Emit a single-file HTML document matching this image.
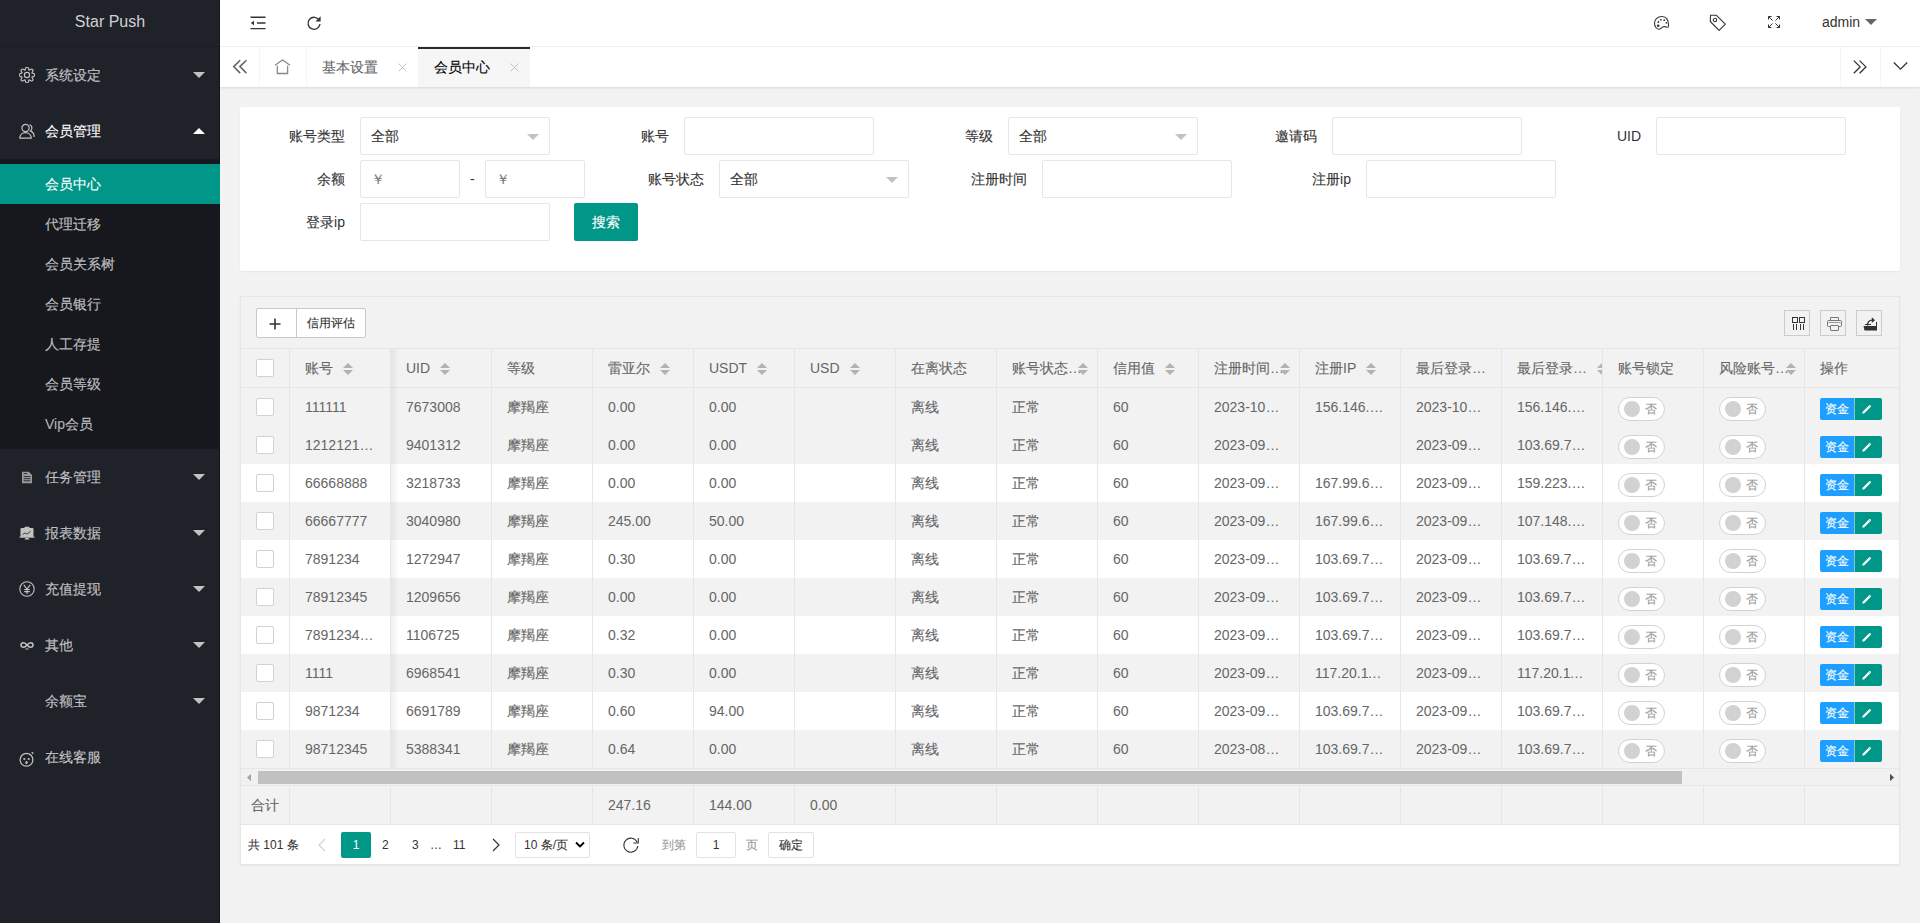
<!DOCTYPE html><html><head><meta charset="utf-8"><title>Star Push</title><style>
*{margin:0;padding:0;box-sizing:border-box}
html,body{width:1920px;height:923px;overflow:hidden;background:#f2f2f2;font-family:"Liberation Sans", sans-serif;font-size:14px;color:#333}
.abs{position:absolute}
z{-webkit-text-stroke-width:.12px}
.t{position:absolute;white-space:nowrap;line-height:20px}
#side{position:absolute;left:0;top:0;width:220px;height:923px;background:#20222A}
.logo{position:absolute;left:0;top:0;width:220px;height:46px;line-height:44px;text-align:center;font-size:16px;color:rgba(255,255,255,.8)}
.nav{position:absolute;left:0;width:220px;height:56px;line-height:56px;color:rgba(255,255,255,.7)}
.nav span{position:absolute;left:45px;top:0}
.nav .ico{position:absolute;left:19px;top:20px;width:16px;height:16px}
.more{position:absolute;left:193px;width:0;height:0;border-left:6px solid transparent;border-right:6px solid transparent}
.child{position:absolute;left:0;width:220px;height:40px;line-height:40px;color:rgba(255,255,255,.7)}
.child span{position:absolute;left:45px;top:0}
#hdr{position:absolute;left:220px;top:0;width:1700px;height:47px;background:#fff;border-bottom:1px solid #f0f0f0}
#tabs{position:absolute;left:220px;top:47px;width:1700px;height:40px;background:#fff;box-shadow:0 1px 2px 0 rgba(0,0,0,.1)}
.card{position:absolute;background:#fff;border-radius:2px;box-shadow:0 1px 2px 0 rgba(0,0,0,.05)}
.lab{position:absolute;width:110px;height:38px;line-height:38px;text-align:right;padding-right:15px;color:#333}
.inp{position:absolute;height:38px;border:1px solid #e6e6e6;border-radius:2px;background:#fff;line-height:36px;padding-left:10px;color:#333}
.edge{position:absolute;width:0;height:0;border-left:6px solid transparent;border-right:6px solid transparent;border-top:6px solid #c2c2c2}
.btn{position:absolute;background:#009688;color:#fff;border-radius:2px;text-align:center}
#tv{position:absolute;left:240px;top:296px;width:1660px;height:569px;border:1px solid #e6e6e6;background:#fff;overflow:hidden}
.row{position:absolute;left:241px;width:1658px;height:38px}
.cell{position:absolute;height:38px;line-height:38px;padding-left:15px;color:#666;white-space:nowrap;overflow:hidden}
.cell i{display:block;font-style:normal;width:70px;overflow:hidden;text-overflow:ellipsis;white-space:nowrap}
.vb{position:absolute;width:1px;background:#e6e6e6}
.hb{position:absolute;height:1px;background:#e6e6e6}
.sort{position:absolute;top:14px;width:10px;height:12px}
.sort:before{content:'';position:absolute;left:0;top:0;border-left:5px solid transparent;border-right:5px solid transparent;border-bottom:5px solid #b2b2b2}
.sort:after{content:'';position:absolute;left:0;top:7px;border-left:5px solid transparent;border-right:5px solid transparent;border-top:5px solid #b2b2b2}
.sorti{display:inline-block;position:relative;vertical-align:top;margin-left:10px;width:10px;height:38px}
.sorti:before{content:'';position:absolute;left:0;top:14px;border-left:5px solid transparent;border-right:5px solid transparent;border-bottom:5px solid #b2b2b2}
.sorti:after{content:'';position:absolute;left:0;top:21px;border-left:5px solid transparent;border-right:5px solid transparent;border-top:5px solid #b2b2b2}
.cb{position:absolute;width:18px;height:18px;border:1px solid #d2d2d2;border-radius:2px;background:#fff}
.sw{position:absolute;width:47px;height:24px;border:1px solid #d2d2d2;border-radius:20px;background:#fff}
.sw:before{content:'';position:absolute;left:5px;top:3px;width:16px;height:16px;border-radius:20px;background:#d2d2d2}
.sw b{position:absolute;left:26px;top:0;line-height:22px;font-size:12px;font-weight:normal;color:#999}
.bb{position:absolute;height:22px;line-height:22px;font-size:12px;color:#fff;text-align:center}
</style></head><body>
<div id="side">
<div class="logo">Star Push</div>
<div class="abs" style="left:219px;top:0;width:1px;height:923px;background:#14161b"></div>
<div class="abs" style="left:0;top:46px;width:219px;height:1px;background:#1c1e24"></div>
<div class="nav" style="top:47px;color:rgba(255,255,255,.7)"><svg class="ico" viewBox="0 0 16 16" style="top:20px"><g fill="none" stroke="#c2c2c2" stroke-width="1.2" stroke-linejoin="round"><path d="M6.01 3.09L6.66 1.13 A1.4 1.4 0 0 1 9.34 1.13 L9.99 3.09L10.07 3.12L11.91 2.20 A1.4 1.4 0 0 1 13.80 4.09 L12.88 5.93L12.91 6.01L14.87 6.66 A1.4 1.4 0 0 1 14.87 9.34 L12.91 9.99L12.88 10.07L13.80 11.91 A1.4 1.4 0 0 1 11.91 13.80 L10.07 12.88L9.99 12.91L9.34 14.87 A1.4 1.4 0 0 1 6.66 14.87 L6.01 12.91L5.93 12.88L4.09 13.80 A1.4 1.4 0 0 1 2.20 11.91 L3.12 10.07L3.09 9.99L1.13 9.34 A1.4 1.4 0 0 1 1.13 6.66 L3.09 6.01L3.12 5.93L2.20 4.09 A1.4 1.4 0 0 1 4.09 2.20 L5.93 3.12Z"/><circle cx="8" cy="8" r="2.6"/></g></svg><span><z>系统设定</z></span><i class="more" style="top:25px;border-top:6px solid #c2c2c2"></i></div>
<div class="nav" style="top:103px;color:#fff"><svg class="ico" viewBox="0 0 16 16" style="top:20px"><g fill="none" stroke="#c2c2c2" stroke-width="1.2"><circle cx="6.5" cy="5" r="3.6"/><path d="M0.8 15.2c0-3.3 2.5-5.6 5.7-5.6s5.7 2.3 5.7 5.6z"/><path d="M10.5 1.8c1.6.5 2.4 1.8 2.4 3.2 0 1.2-.6 2.3-1.6 2.9 2.2.9 3.9 3.2 3.9 6"/></g></svg><span><z>会员管理</z></span><i class="more" style="top:25px;border-bottom:6px solid #fff"></i></div>
<div class="abs" style="left:0;top:159px;width:220px;height:290px;background:#16181d"></div>
<div class="abs" style="left:0;top:164px;width:220px;height:40px;background:#009688"></div>
<div class="child" style="top:164px;color:#fff"><span><z>会员中心</z></span></div>
<div class="child" style="top:204px;color:rgba(255,255,255,.7)"><span><z>代理迁移</z></span></div>
<div class="child" style="top:244px;color:rgba(255,255,255,.7)"><span><z>会员关系树</z></span></div>
<div class="child" style="top:284px;color:rgba(255,255,255,.7)"><span><z>会员银行</z></span></div>
<div class="child" style="top:324px;color:rgba(255,255,255,.7)"><span><z>人工存提</z></span></div>
<div class="child" style="top:364px;color:rgba(255,255,255,.7)"><span><z>会员等级</z></span></div>
<div class="child" style="top:404px;color:rgba(255,255,255,.7)"><span>Vip<z>会员</z></span></div>
<div class="nav" style="top:449px;color:rgba(255,255,255,.7)"><svg class="ico" viewBox="0 0 16 16" style="top:20px"><path d="M3 2.8h6.800l3.200 3.200v8.200H3z" fill="#9a9a9c"/><g stroke="#20222A" stroke-width=".9"><path d="M4.6 4.6h3.4M4.600 7.6h6.8M4.600 9.7h6.8M4.600 11.800h6.8"/></g></svg><span><z>任务管理</z></span><i class="more" style="top:25px;border-top:6px solid #c2c2c2"></i></div>
<div class="nav" style="top:505px;color:rgba(255,255,255,.7)"><svg class="ico" viewBox="0 0 16 16" style="top:20px"><g fill="#c2c2c2"><rect x="1.5" y="3" width="13" height="9" rx="1"/><rect x="0.5" y="11.5" width="15" height="1.2"/><path d="M6.5 13h3l1 1.5h-5z"/><rect x="5.5" y="1.8" width="5" height="1.5" rx=".5"/></g><path d="M3.5 9.5l2.5-1.5 2 1 3.5-2.5" fill="none" stroke="#20222A" stroke-width=".8"/></svg><span><z>报表数据</z></span><i class="more" style="top:25px;border-top:6px solid #c2c2c2"></i></div>
<div class="nav" style="top:561px;color:rgba(255,255,255,.7)"><svg class="ico" viewBox="0 0 16 16" style="top:20px"><g fill="none" stroke="#c2c2c2" stroke-width="1.1"><circle cx="8" cy="8" r="7.2"/><path d="M4.8 3.8L8 8l3.2-4.2M8 8v5M5.2 8.5h5.6M5.2 10.6h5.6"/></g></svg><span><z>充值提现</z></span><i class="more" style="top:25px;border-top:6px solid #c2c2c2"></i></div>
<div class="nav" style="top:617px;color:rgba(255,255,255,.7)"><svg class="ico" viewBox="0 0 16 16" style="top:20px"><g fill="none" stroke="#c2c2c2" stroke-width="1.5"><path d="M8 8c-1.2-1.5-2.2-2.3-3.5-2.3C3 5.7 2 6.700 2 8s1 2.3 2.5 2.3c1.300 0 2.3-.8 3.5-2.3s2.2-2.3 3.500-2.3C13 5.7 14 6.7 14 8s-1 2.3-2.5 2.3c-1.3 0-2.300-.8-3.500-2.3z"/></g><path d="M6.5 12h3" stroke="#c2c2c2" stroke-width="1"/></svg><span><z>其他</z></span><i class="more" style="top:25px;border-top:6px solid #c2c2c2"></i></div>
<div class="nav" style="top:673px;color:rgba(255,255,255,.7)"><span><z>余额宝</z></span><i class="more" style="top:25px;border-top:6px solid #c2c2c2"></i></div>
<div class="nav" style="top:729px"><svg class="ico" viewBox="0 0 16 16" style="top:22px"><g fill="none" stroke="#c2c2c2" stroke-width="1.2"><circle cx="7.5" cy="8.8" r="6.4"/></g><g fill="#c2c2c2"><circle cx="5.3" cy="8" r="1.1"/><circle cx="9.7" cy="8" r="1.1"/><ellipse cx="7.5" cy="11.6" rx="1.2" ry="1.5"/><path d="M12 1.5l2.5-.5-.5 2.5z"/></g></svg><span><z>在线客服</z></span></div>
</div>
<div id="hdr">
<svg class="abs" style="left:30px;top:16px" width="16" height="14" viewBox="0 0 16 14"><g stroke="#333" stroke-width="1.4"><path d="M0.5 1.2h15M7 7h8.500M0.5 12.6h15"/></g><path d="M0.8 7l3.2-2.2v4.4z" fill="#333"/></svg>
<svg class="abs" style="left:86px;top:15px" width="16" height="16" viewBox="0 0 16 16"><path d="M13.2 5.2A6 6 0 1 0 14 9" fill="none" stroke="#333" stroke-width="1.35"/><path d="M14.6 1.2v5.2H9.4z" fill="#333"/></svg>
<svg class="abs" style="left:1433px;top:15px" width="18" height="16" viewBox="0 0 18 16"><path d="M9 1.5C4.6 1.5 1.5 4.5 1.5 8.2c0 3.4 2.3 6 4.5 6 2 0 2.600-2.600 5.300-2.600 1.700 0 2.300.7 3.100.7.8 0 1.200-.6 1.200-2.100C15.600 5 13.300 1.500 9 1.500z" fill="none" stroke="#333" stroke-width="1.1"/><g fill="#333"><circle cx="5.4" cy="7" r=".9"/><circle cx="7.9" cy="4.8" r=".9"/><circle cx="11.2" cy="5.2" r=".9"/><circle cx="13.4" cy="7.8" r=".9"/><circle cx="5.2" cy="10.8" r="1.3"/></g></svg>
<svg class="abs" style="left:1489px;top:14px" width="18" height="18" viewBox="0 0 18 18"><path d="M1.5 1.3h6l8.8 8.800-6.200 6.200L1.3 7.500z" fill="none" stroke="#333" stroke-width="1.1" stroke-linejoin="round"/><circle cx="6" cy="6" r="1.7" fill="none" stroke="#333" stroke-width="1.1"/></svg>
<svg class="abs" style="left:1547px;top:15px" width="14" height="14" viewBox="0 0 14 14"><g fill="none" stroke="#333" stroke-width="1"><path d="M1.5 4.5v-3h3M1.5 1.5l4 4M9.5 1.5h3v3M12.5 1.5l-4 4M1.5 9.5v3h3M1.5 12.5l4-4M12.5 9.5v3h-3M12.5 12.5l-4-4"/></g></svg>
<div class="t" style="left:1602px;top:12px;line-height:20px;color:#333">admin</div>
<i class="abs" style="left:1645px;top:19px;width:0;height:0;border-left:6px solid transparent;border-right:6px solid transparent;border-top:6px solid #666"></i>
</div>
<div id="tabs">
<div class="abs" style="left:39px;top:0;width:1px;height:40px;background:#f6f6f6"></div>
<div class="abs" style="left:86px;top:0;width:1px;height:40px;background:#f6f6f6"></div>
<div class="abs" style="left:198px;top:0;width:1px;height:40px;background:#f6f6f6"></div>
<div class="abs" style="left:1620px;top:0;width:1px;height:40px;background:#f6f6f6"></div>
<div class="abs" style="left:1660px;top:0;width:1px;height:40px;background:#f6f6f6"></div>
<svg class="abs" style="left:12px;top:12px" width="16" height="16" viewBox="0 0 16 16"><g fill="none" stroke="#666" stroke-width="1.6"><path d="M8.2 1.2L1.7 7.6l6.5 6.5M14.4 1.2L7.9 7.6l6.5 6.5"/></g></svg>
<svg class="abs" style="left:54px;top:12px" width="18" height="16" viewBox="0 0 18 16"><g fill="none" stroke="#888" stroke-width="1.3"><path d="M1 6.2L8.5 1l7.5 5.2"/><path d="M3.3 6.7v7.8h10.3V6.7"/></g></svg>
<div class="t" style="left:102px;top:10px;color:#666"><z>基本设置</z></div>
<svg class="abs" style="left:178px;top:16px" width="9" height="9" viewBox="0 0 9 9"><path d="M.5.5l8 8M8.5.5l-8 8" stroke="#c2c2c2" stroke-width="1"/></svg>
<div class="abs" style="left:198px;top:0;width:112px;height:40px;background:#f6f6f6"></div>
<div class="abs" style="left:198px;top:0;width:112px;height:2px;background:#292B34"></div>
<div class="t" style="left:214px;top:10px;color:#000"><z>会员中心</z></div>
<svg class="abs" style="left:290px;top:16px" width="9" height="9" viewBox="0 0 9 9"><path d="M.5.5l8 8M8.5.5l-8 8" stroke="#c2c2c2" stroke-width="1"/></svg>
<svg class="abs" style="left:1632px;top:12px" width="16" height="16" viewBox="0 0 16 16"><g fill="none" stroke="#333" stroke-width="1.3"><path d="M1.8 1.6l6.3 6.3-6.3 6.3M7.6 1.6l6.3 6.3-6.3 6.3"/></g></svg>
<svg class="abs" style="left:1673px;top:14px" width="15" height="10" viewBox="0 0 15 10"><path d="M.8 1.5l6.7 6.7 6.7-6.7" fill="none" stroke="#333" stroke-width="1.3"/></svg>
</div>
<div class="card" style="left:240px;top:107px;width:1660px;height:164px"></div>
<div class="lab" style="left:250px;top:117px"><z>账号类型</z></div>
<div class="inp" style="left:360px;top:117px;width:190px;color:#333"><z>全部</z><i class="edge" style="right:10px;top:16px"></i></div>
<div class="lab" style="left:574px;top:117px"><z>账号</z></div>
<div class="inp" style="left:684px;top:117px;width:190px;color:#333"></div>
<div class="lab" style="left:898px;top:117px"><z>等级</z></div>
<div class="inp" style="left:1008px;top:117px;width:190px;color:#333"><z>全部</z><i class="edge" style="right:10px;top:16px"></i></div>
<div class="lab" style="left:1222px;top:117px"><z>邀请码</z></div>
<div class="inp" style="left:1332px;top:117px;width:190px;color:#333"></div>
<div class="lab" style="left:1546px;top:117px">UID</div>
<div class="inp" style="left:1656px;top:117px;width:190px;color:#333"></div>
<div class="lab" style="left:250px;top:160px"><z>余额</z></div>
<div class="inp" style="left:360px;top:160px;width:100px;color:#757575">￥</div>
<div class="t" style="left:470px;top:169px;color:#333">-</div>
<div class="inp" style="left:485px;top:160px;width:100px;color:#757575">￥</div>
<div class="lab" style="left:609px;top:160px"><z>账号状态</z></div>
<div class="inp" style="left:719px;top:160px;width:190px;color:#333"><z>全部</z><i class="edge" style="right:10px;top:16px"></i></div>
<div class="lab" style="left:932px;top:160px"><z>注册时间</z></div>
<div class="inp" style="left:1042px;top:160px;width:190px;color:#333"></div>
<div class="lab" style="left:1256px;top:160px"><z>注册</z>ip</div>
<div class="inp" style="left:1366px;top:160px;width:190px;color:#333"></div>
<div class="lab" style="left:250px;top:203px"><z>登录</z>ip</div>
<div class="inp" style="left:360px;top:203px;width:190px;color:#333"></div>
<div class="btn" style="left:574px;top:203px;width:64px;height:38px;line-height:38px"><z>搜索</z></div>
<div id="tv" style="background:#f2f2f2"></div>
<div class="abs" style="left:256px;top:308px;width:110px;height:30px;border:1px solid #c9c9c9;border-radius:2px;background:#fff"></div>
<div class="abs" style="left:296px;top:309px;width:1px;height:28px;background:#c9c9c9"></div>
<svg class="abs" style="left:269px;top:318px" width="12" height="12" viewBox="0 0 12 12"><path d="M6 0.5v11M0.5 6h11" stroke="#333" stroke-width="1.6"/></svg>
<div class="t" style="left:307px;top:314px;font-size:12px;line-height:18px;color:#333"><z>信用评估</z></div>
<div class="abs" style="left:1784px;top:310px;width:26px;height:26px;border:1px solid #ccc"></div>
<div class="abs" style="left:1820px;top:310px;width:26px;height:26px;border:1px solid #ccc"></div>
<div class="abs" style="left:1856px;top:310px;width:26px;height:26px;border:1px solid #ccc"></div>
<svg class="abs" style="left:1792px;top:317px" width="14" height="14" viewBox="0 0 14 14"><g fill="none" stroke="#333" stroke-width="1"><rect x=".5" y=".5" width="5" height="5"/><rect x="7.5" y=".5" width="5" height="5"/><path d="M1.5 7v6M4.5 7v6M8.5 7v6M11.5 7v6"/></g></svg>
<svg class="abs" style="left:1826px;top:316px" width="16" height="16" viewBox="0 0 16 16"><g fill="none" stroke="#777" stroke-width="1"><path d="M4.5 4.5V1.5h8v3"/><path d="M4 10.5H2.5a1 1 0 0 1-1-1V5.5a1 1 0 0 1 1-1h12a1 1 0 0 1 1 1v4a1 1 0 0 1-1 1H13"/><rect x="4.5" y="9.5" width="8" height="5" rx=".5"/></g><path d="M2.5 6.5h12" stroke="#999" stroke-width="1"/></svg>
<svg class="abs" style="left:1862px;top:316px" width="16" height="16" viewBox="0 0 16 16"><path d="M1.5 10h12.5v4.5H2.5z" fill="#333"/><path d="M14.5 6v8.5M3 8.5h6" fill="none" stroke="#333" stroke-width="1"/><path d="M5.5 9.5C5.5 6.3 7 4.2 10.2 4.2" fill="none" stroke="#333" stroke-width="1.3"/><path d="M9.8 1.3l3.2 2.9-3.2 2.900z" fill="#333"/></svg>
<div class="hb" style="left:241px;top:348px;width:1658px"></div>
<div class="hb" style="left:241px;top:387px;width:1658px"></div>
<div class="abs" style="left:241px;top:388px;width:1658px;height:38px;background:#f2f2f2"></div>
<div class="abs" style="left:241px;top:426px;width:1658px;height:38px;background:#f2f2f2"></div>
<div class="abs" style="left:241px;top:464px;width:1658px;height:38px;background:#fff"></div>
<div class="abs" style="left:241px;top:502px;width:1658px;height:38px;background:#f2f2f2"></div>
<div class="abs" style="left:241px;top:540px;width:1658px;height:38px;background:#fff"></div>
<div class="abs" style="left:241px;top:578px;width:1658px;height:38px;background:#f2f2f2"></div>
<div class="abs" style="left:241px;top:616px;width:1658px;height:38px;background:#fff"></div>
<div class="abs" style="left:241px;top:654px;width:1658px;height:38px;background:#f2f2f2"></div>
<div class="abs" style="left:241px;top:692px;width:1658px;height:38px;background:#fff"></div>
<div class="abs" style="left:241px;top:730px;width:1658px;height:38px;background:#f2f2f2"></div>
<div class="vb" style="left:289px;top:349px;height:419px"></div>
<div class="vb" style="left:390px;top:349px;height:419px"></div>
<div class="vb" style="left:491px;top:349px;height:419px"></div>
<div class="vb" style="left:592px;top:349px;height:419px"></div>
<div class="vb" style="left:693px;top:349px;height:419px"></div>
<div class="vb" style="left:794px;top:349px;height:419px"></div>
<div class="vb" style="left:895px;top:349px;height:419px"></div>
<div class="vb" style="left:996px;top:349px;height:419px"></div>
<div class="vb" style="left:1097px;top:349px;height:419px"></div>
<div class="vb" style="left:1198px;top:349px;height:419px"></div>
<div class="vb" style="left:1299px;top:349px;height:419px"></div>
<div class="vb" style="left:1400px;top:349px;height:419px"></div>
<div class="vb" style="left:1501px;top:349px;height:419px"></div>
<div class="vb" style="left:1602px;top:349px;height:419px"></div>
<div class="vb" style="left:1703px;top:349px;height:419px"></div>
<div class="vb" style="left:1804px;top:349px;height:419px"></div>
<div class="abs" style="left:256px;top:359px;width:18px;height:18px;border:1px solid #d2d2d2;border-radius:2px;background:#fff"></div>
<div class="cell" style="left:290px;top:349px;width:100px"><span><z>账号</z></span><em class="sorti"></em></div>
<div class="cell" style="left:391px;top:349px;width:100px"><span>UID</span><em class="sorti"></em></div>
<div class="cell" style="left:492px;top:349px;width:100px"><span><z>等级</z></span></div>
<div class="cell" style="left:593px;top:349px;width:100px"><span><z>雷亚尔</z></span><em class="sorti"></em></div>
<div class="cell" style="left:694px;top:349px;width:100px"><span>USDT</span><em class="sorti"></em></div>
<div class="cell" style="left:795px;top:349px;width:100px"><span>USD</span><em class="sorti"></em></div>
<div class="cell" style="left:896px;top:349px;width:100px"><span><z>在离状态</z></span></div>
<div class="cell" style="left:997px;top:349px;width:100px"><span><z>账号状态</z>…</span><em class="sort" style="left:81px"></em></div>
<div class="cell" style="left:1098px;top:349px;width:100px"><span><z>信用值</z></span><em class="sorti"></em></div>
<div class="cell" style="left:1199px;top:349px;width:100px"><span><z>注册时间</z>…</span><em class="sort" style="left:81px"></em></div>
<div class="cell" style="left:1300px;top:349px;width:100px"><span><z>注册</z>IP</span><em class="sorti"></em></div>
<div class="cell" style="left:1401px;top:349px;width:100px"><span><z>最后登录</z>…</span></div>
<div class="cell" style="left:1502px;top:349px;width:100px"><span><z>最后登录</z>…</span><em class="sort" style="left:95px"></em></div>
<div class="cell" style="left:1603px;top:349px;width:100px"><span><z>账号锁定</z></span></div>
<div class="cell" style="left:1704px;top:349px;width:100px"><span><z>风险账号</z>…</span><em class="sort" style="left:82px"></em></div>
<div class="cell" style="left:1805px;top:349px;width:94px"><span><z>操作</z></span></div>
<div class="cb" style="left:256px;top:398px"></div>
<div class="cell" style="left:290px;top:388px;width:100px"><i>111111</i></div>
<div class="cell" style="left:391px;top:388px;width:100px"><i>7673008</i></div>
<div class="cell" style="left:492px;top:388px;width:100px"><i><z>摩羯座</z></i></div>
<div class="cell" style="left:593px;top:388px;width:100px"><i>0.00</i></div>
<div class="cell" style="left:694px;top:388px;width:100px"><i>0.00</i></div>
<div class="cell" style="left:896px;top:388px;width:100px"><i><z>离线</z></i></div>
<div class="cell" style="left:997px;top:388px;width:100px"><i><z>正常</z></i></div>
<div class="cell" style="left:1098px;top:388px;width:100px"><i>60</i></div>
<div class="cell" style="left:1199px;top:388px;width:100px"><i>2023-10-12 11:22:33</i></div>
<div class="cell" style="left:1300px;top:388px;width:100px"><i>156.146.62.12</i></div>
<div class="cell" style="left:1401px;top:388px;width:100px"><i>2023-10-12 11:22:33</i></div>
<div class="cell" style="left:1502px;top:388px;width:100px"><i>156.146.62.12</i></div>
<div class="sw" style="left:1618px;top:397px"><b><z>否</z></b></div>
<div class="sw" style="left:1719px;top:397px"><b><z>否</z></b></div>
<div class="bb" style="left:1820px;top:398px;width:34px;background:#1E9FFF;border-radius:2px 0 0 2px"><z>资金</z></div>
<div class="bb" style="left:1854px;top:398px;width:28px;background:#009688;border-left:1px solid rgba(255,255,255,.5);border-radius:0 2px 2px 0"><svg style="position:absolute;left:6px;top:5px" width="12" height="12" viewBox="0 0 12 12"><path d="M1.2 10.8l.5-2.1 6.4-6.4a1 1 0 0 1 1.4 0l.2.2a1 1 0 0 1 0 1.4L3.3 10.3z" fill="#fff"/><path d="M7.6 2.6l1.800 1.800" stroke="#009688" stroke-width=".5"/></svg></div>
<div class="cb" style="left:256px;top:436px"></div>
<div class="cell" style="left:290px;top:426px;width:100px"><i>1212121212</i></div>
<div class="cell" style="left:391px;top:426px;width:100px"><i>9401312</i></div>
<div class="cell" style="left:492px;top:426px;width:100px"><i><z>摩羯座</z></i></div>
<div class="cell" style="left:593px;top:426px;width:100px"><i>0.00</i></div>
<div class="cell" style="left:694px;top:426px;width:100px"><i>0.00</i></div>
<div class="cell" style="left:896px;top:426px;width:100px"><i><z>离线</z></i></div>
<div class="cell" style="left:997px;top:426px;width:100px"><i><z>正常</z></i></div>
<div class="cell" style="left:1098px;top:426px;width:100px"><i>60</i></div>
<div class="cell" style="left:1199px;top:426px;width:100px"><i>2023-09-12 11:22:33</i></div>
<div class="cell" style="left:1401px;top:426px;width:100px"><i>2023-09-12 11:22:33</i></div>
<div class="cell" style="left:1502px;top:426px;width:100px"><i>103.69.74.12</i></div>
<div class="sw" style="left:1618px;top:435px"><b><z>否</z></b></div>
<div class="sw" style="left:1719px;top:435px"><b><z>否</z></b></div>
<div class="bb" style="left:1820px;top:436px;width:34px;background:#1E9FFF;border-radius:2px 0 0 2px"><z>资金</z></div>
<div class="bb" style="left:1854px;top:436px;width:28px;background:#009688;border-left:1px solid rgba(255,255,255,.5);border-radius:0 2px 2px 0"><svg style="position:absolute;left:6px;top:5px" width="12" height="12" viewBox="0 0 12 12"><path d="M1.2 10.8l.5-2.1 6.4-6.4a1 1 0 0 1 1.4 0l.2.2a1 1 0 0 1 0 1.4L3.3 10.3z" fill="#fff"/><path d="M7.6 2.6l1.800 1.800" stroke="#009688" stroke-width=".5"/></svg></div>
<div class="cb" style="left:256px;top:474px"></div>
<div class="cell" style="left:290px;top:464px;width:100px"><i>66668888</i></div>
<div class="cell" style="left:391px;top:464px;width:100px"><i>3218733</i></div>
<div class="cell" style="left:492px;top:464px;width:100px"><i><z>摩羯座</z></i></div>
<div class="cell" style="left:593px;top:464px;width:100px"><i>0.00</i></div>
<div class="cell" style="left:694px;top:464px;width:100px"><i>0.00</i></div>
<div class="cell" style="left:896px;top:464px;width:100px"><i><z>离线</z></i></div>
<div class="cell" style="left:997px;top:464px;width:100px"><i><z>正常</z></i></div>
<div class="cell" style="left:1098px;top:464px;width:100px"><i>60</i></div>
<div class="cell" style="left:1199px;top:464px;width:100px"><i>2023-09-12 11:22:33</i></div>
<div class="cell" style="left:1300px;top:464px;width:100px"><i>167.99.63.12</i></div>
<div class="cell" style="left:1401px;top:464px;width:100px"><i>2023-09-12 11:22:33</i></div>
<div class="cell" style="left:1502px;top:464px;width:100px"><i>159.223.12.12</i></div>
<div class="sw" style="left:1618px;top:473px"><b><z>否</z></b></div>
<div class="sw" style="left:1719px;top:473px"><b><z>否</z></b></div>
<div class="bb" style="left:1820px;top:474px;width:34px;background:#1E9FFF;border-radius:2px 0 0 2px"><z>资金</z></div>
<div class="bb" style="left:1854px;top:474px;width:28px;background:#009688;border-left:1px solid rgba(255,255,255,.5);border-radius:0 2px 2px 0"><svg style="position:absolute;left:6px;top:5px" width="12" height="12" viewBox="0 0 12 12"><path d="M1.2 10.8l.5-2.1 6.4-6.4a1 1 0 0 1 1.4 0l.2.2a1 1 0 0 1 0 1.4L3.3 10.3z" fill="#fff"/><path d="M7.6 2.6l1.800 1.800" stroke="#009688" stroke-width=".5"/></svg></div>
<div class="cb" style="left:256px;top:512px"></div>
<div class="cell" style="left:290px;top:502px;width:100px"><i>66667777</i></div>
<div class="cell" style="left:391px;top:502px;width:100px"><i>3040980</i></div>
<div class="cell" style="left:492px;top:502px;width:100px"><i><z>摩羯座</z></i></div>
<div class="cell" style="left:593px;top:502px;width:100px"><i>245.00</i></div>
<div class="cell" style="left:694px;top:502px;width:100px"><i>50.00</i></div>
<div class="cell" style="left:896px;top:502px;width:100px"><i><z>离线</z></i></div>
<div class="cell" style="left:997px;top:502px;width:100px"><i><z>正常</z></i></div>
<div class="cell" style="left:1098px;top:502px;width:100px"><i>60</i></div>
<div class="cell" style="left:1199px;top:502px;width:100px"><i>2023-09-12 11:22:33</i></div>
<div class="cell" style="left:1300px;top:502px;width:100px"><i>167.99.63.12</i></div>
<div class="cell" style="left:1401px;top:502px;width:100px"><i>2023-09-12 11:22:33</i></div>
<div class="cell" style="left:1502px;top:502px;width:100px"><i>107.148.12.12</i></div>
<div class="sw" style="left:1618px;top:511px"><b><z>否</z></b></div>
<div class="sw" style="left:1719px;top:511px"><b><z>否</z></b></div>
<div class="bb" style="left:1820px;top:512px;width:34px;background:#1E9FFF;border-radius:2px 0 0 2px"><z>资金</z></div>
<div class="bb" style="left:1854px;top:512px;width:28px;background:#009688;border-left:1px solid rgba(255,255,255,.5);border-radius:0 2px 2px 0"><svg style="position:absolute;left:6px;top:5px" width="12" height="12" viewBox="0 0 12 12"><path d="M1.2 10.8l.5-2.1 6.4-6.4a1 1 0 0 1 1.4 0l.2.2a1 1 0 0 1 0 1.4L3.3 10.3z" fill="#fff"/><path d="M7.6 2.6l1.800 1.800" stroke="#009688" stroke-width=".5"/></svg></div>
<div class="cb" style="left:256px;top:550px"></div>
<div class="cell" style="left:290px;top:540px;width:100px"><i>7891234</i></div>
<div class="cell" style="left:391px;top:540px;width:100px"><i>1272947</i></div>
<div class="cell" style="left:492px;top:540px;width:100px"><i><z>摩羯座</z></i></div>
<div class="cell" style="left:593px;top:540px;width:100px"><i>0.30</i></div>
<div class="cell" style="left:694px;top:540px;width:100px"><i>0.00</i></div>
<div class="cell" style="left:896px;top:540px;width:100px"><i><z>离线</z></i></div>
<div class="cell" style="left:997px;top:540px;width:100px"><i><z>正常</z></i></div>
<div class="cell" style="left:1098px;top:540px;width:100px"><i>60</i></div>
<div class="cell" style="left:1199px;top:540px;width:100px"><i>2023-09-12 11:22:33</i></div>
<div class="cell" style="left:1300px;top:540px;width:100px"><i>103.69.74.12</i></div>
<div class="cell" style="left:1401px;top:540px;width:100px"><i>2023-09-12 11:22:33</i></div>
<div class="cell" style="left:1502px;top:540px;width:100px"><i>103.69.74.12</i></div>
<div class="sw" style="left:1618px;top:549px"><b><z>否</z></b></div>
<div class="sw" style="left:1719px;top:549px"><b><z>否</z></b></div>
<div class="bb" style="left:1820px;top:550px;width:34px;background:#1E9FFF;border-radius:2px 0 0 2px"><z>资金</z></div>
<div class="bb" style="left:1854px;top:550px;width:28px;background:#009688;border-left:1px solid rgba(255,255,255,.5);border-radius:0 2px 2px 0"><svg style="position:absolute;left:6px;top:5px" width="12" height="12" viewBox="0 0 12 12"><path d="M1.2 10.8l.5-2.1 6.4-6.4a1 1 0 0 1 1.4 0l.2.2a1 1 0 0 1 0 1.4L3.3 10.3z" fill="#fff"/><path d="M7.6 2.6l1.800 1.800" stroke="#009688" stroke-width=".5"/></svg></div>
<div class="cb" style="left:256px;top:588px"></div>
<div class="cell" style="left:290px;top:578px;width:100px"><i>78912345</i></div>
<div class="cell" style="left:391px;top:578px;width:100px"><i>1209656</i></div>
<div class="cell" style="left:492px;top:578px;width:100px"><i><z>摩羯座</z></i></div>
<div class="cell" style="left:593px;top:578px;width:100px"><i>0.00</i></div>
<div class="cell" style="left:694px;top:578px;width:100px"><i>0.00</i></div>
<div class="cell" style="left:896px;top:578px;width:100px"><i><z>离线</z></i></div>
<div class="cell" style="left:997px;top:578px;width:100px"><i><z>正常</z></i></div>
<div class="cell" style="left:1098px;top:578px;width:100px"><i>60</i></div>
<div class="cell" style="left:1199px;top:578px;width:100px"><i>2023-09-12 11:22:33</i></div>
<div class="cell" style="left:1300px;top:578px;width:100px"><i>103.69.74.12</i></div>
<div class="cell" style="left:1401px;top:578px;width:100px"><i>2023-09-12 11:22:33</i></div>
<div class="cell" style="left:1502px;top:578px;width:100px"><i>103.69.74.12</i></div>
<div class="sw" style="left:1618px;top:587px"><b><z>否</z></b></div>
<div class="sw" style="left:1719px;top:587px"><b><z>否</z></b></div>
<div class="bb" style="left:1820px;top:588px;width:34px;background:#1E9FFF;border-radius:2px 0 0 2px"><z>资金</z></div>
<div class="bb" style="left:1854px;top:588px;width:28px;background:#009688;border-left:1px solid rgba(255,255,255,.5);border-radius:0 2px 2px 0"><svg style="position:absolute;left:6px;top:5px" width="12" height="12" viewBox="0 0 12 12"><path d="M1.2 10.8l.5-2.1 6.4-6.4a1 1 0 0 1 1.4 0l.2.2a1 1 0 0 1 0 1.4L3.3 10.3z" fill="#fff"/><path d="M7.6 2.6l1.800 1.800" stroke="#009688" stroke-width=".5"/></svg></div>
<div class="cb" style="left:256px;top:626px"></div>
<div class="cell" style="left:290px;top:616px;width:100px"><i>78912345678</i></div>
<div class="cell" style="left:391px;top:616px;width:100px"><i>1106725</i></div>
<div class="cell" style="left:492px;top:616px;width:100px"><i><z>摩羯座</z></i></div>
<div class="cell" style="left:593px;top:616px;width:100px"><i>0.32</i></div>
<div class="cell" style="left:694px;top:616px;width:100px"><i>0.00</i></div>
<div class="cell" style="left:896px;top:616px;width:100px"><i><z>离线</z></i></div>
<div class="cell" style="left:997px;top:616px;width:100px"><i><z>正常</z></i></div>
<div class="cell" style="left:1098px;top:616px;width:100px"><i>60</i></div>
<div class="cell" style="left:1199px;top:616px;width:100px"><i>2023-09-12 11:22:33</i></div>
<div class="cell" style="left:1300px;top:616px;width:100px"><i>103.69.74.12</i></div>
<div class="cell" style="left:1401px;top:616px;width:100px"><i>2023-09-12 11:22:33</i></div>
<div class="cell" style="left:1502px;top:616px;width:100px"><i>103.69.74.12</i></div>
<div class="sw" style="left:1618px;top:625px"><b><z>否</z></b></div>
<div class="sw" style="left:1719px;top:625px"><b><z>否</z></b></div>
<div class="bb" style="left:1820px;top:626px;width:34px;background:#1E9FFF;border-radius:2px 0 0 2px"><z>资金</z></div>
<div class="bb" style="left:1854px;top:626px;width:28px;background:#009688;border-left:1px solid rgba(255,255,255,.5);border-radius:0 2px 2px 0"><svg style="position:absolute;left:6px;top:5px" width="12" height="12" viewBox="0 0 12 12"><path d="M1.2 10.8l.5-2.1 6.4-6.4a1 1 0 0 1 1.4 0l.2.2a1 1 0 0 1 0 1.4L3.3 10.3z" fill="#fff"/><path d="M7.6 2.6l1.800 1.800" stroke="#009688" stroke-width=".5"/></svg></div>
<div class="cb" style="left:256px;top:664px"></div>
<div class="cell" style="left:290px;top:654px;width:100px"><i>1111</i></div>
<div class="cell" style="left:391px;top:654px;width:100px"><i>6968541</i></div>
<div class="cell" style="left:492px;top:654px;width:100px"><i><z>摩羯座</z></i></div>
<div class="cell" style="left:593px;top:654px;width:100px"><i>0.30</i></div>
<div class="cell" style="left:694px;top:654px;width:100px"><i>0.00</i></div>
<div class="cell" style="left:896px;top:654px;width:100px"><i><z>离线</z></i></div>
<div class="cell" style="left:997px;top:654px;width:100px"><i><z>正常</z></i></div>
<div class="cell" style="left:1098px;top:654px;width:100px"><i>60</i></div>
<div class="cell" style="left:1199px;top:654px;width:100px"><i>2023-09-12 11:22:33</i></div>
<div class="cell" style="left:1300px;top:654px;width:100px"><i>117.20.112.12</i></div>
<div class="cell" style="left:1401px;top:654px;width:100px"><i>2023-09-12 11:22:33</i></div>
<div class="cell" style="left:1502px;top:654px;width:100px"><i>117.20.112.12</i></div>
<div class="sw" style="left:1618px;top:663px"><b><z>否</z></b></div>
<div class="sw" style="left:1719px;top:663px"><b><z>否</z></b></div>
<div class="bb" style="left:1820px;top:664px;width:34px;background:#1E9FFF;border-radius:2px 0 0 2px"><z>资金</z></div>
<div class="bb" style="left:1854px;top:664px;width:28px;background:#009688;border-left:1px solid rgba(255,255,255,.5);border-radius:0 2px 2px 0"><svg style="position:absolute;left:6px;top:5px" width="12" height="12" viewBox="0 0 12 12"><path d="M1.2 10.8l.5-2.1 6.4-6.4a1 1 0 0 1 1.4 0l.2.2a1 1 0 0 1 0 1.4L3.3 10.3z" fill="#fff"/><path d="M7.6 2.6l1.800 1.800" stroke="#009688" stroke-width=".5"/></svg></div>
<div class="cb" style="left:256px;top:702px"></div>
<div class="cell" style="left:290px;top:692px;width:100px"><i>9871234</i></div>
<div class="cell" style="left:391px;top:692px;width:100px"><i>6691789</i></div>
<div class="cell" style="left:492px;top:692px;width:100px"><i><z>摩羯座</z></i></div>
<div class="cell" style="left:593px;top:692px;width:100px"><i>0.60</i></div>
<div class="cell" style="left:694px;top:692px;width:100px"><i>94.00</i></div>
<div class="cell" style="left:896px;top:692px;width:100px"><i><z>离线</z></i></div>
<div class="cell" style="left:997px;top:692px;width:100px"><i><z>正常</z></i></div>
<div class="cell" style="left:1098px;top:692px;width:100px"><i>60</i></div>
<div class="cell" style="left:1199px;top:692px;width:100px"><i>2023-09-12 11:22:33</i></div>
<div class="cell" style="left:1300px;top:692px;width:100px"><i>103.69.74.12</i></div>
<div class="cell" style="left:1401px;top:692px;width:100px"><i>2023-09-12 11:22:33</i></div>
<div class="cell" style="left:1502px;top:692px;width:100px"><i>103.69.74.12</i></div>
<div class="sw" style="left:1618px;top:701px"><b><z>否</z></b></div>
<div class="sw" style="left:1719px;top:701px"><b><z>否</z></b></div>
<div class="bb" style="left:1820px;top:702px;width:34px;background:#1E9FFF;border-radius:2px 0 0 2px"><z>资金</z></div>
<div class="bb" style="left:1854px;top:702px;width:28px;background:#009688;border-left:1px solid rgba(255,255,255,.5);border-radius:0 2px 2px 0"><svg style="position:absolute;left:6px;top:5px" width="12" height="12" viewBox="0 0 12 12"><path d="M1.2 10.8l.5-2.1 6.4-6.4a1 1 0 0 1 1.4 0l.2.2a1 1 0 0 1 0 1.4L3.3 10.3z" fill="#fff"/><path d="M7.6 2.6l1.800 1.800" stroke="#009688" stroke-width=".5"/></svg></div>
<div class="cb" style="left:256px;top:740px"></div>
<div class="cell" style="left:290px;top:730px;width:100px"><i>98712345</i></div>
<div class="cell" style="left:391px;top:730px;width:100px"><i>5388341</i></div>
<div class="cell" style="left:492px;top:730px;width:100px"><i><z>摩羯座</z></i></div>
<div class="cell" style="left:593px;top:730px;width:100px"><i>0.64</i></div>
<div class="cell" style="left:694px;top:730px;width:100px"><i>0.00</i></div>
<div class="cell" style="left:896px;top:730px;width:100px"><i><z>离线</z></i></div>
<div class="cell" style="left:997px;top:730px;width:100px"><i><z>正常</z></i></div>
<div class="cell" style="left:1098px;top:730px;width:100px"><i>60</i></div>
<div class="cell" style="left:1199px;top:730px;width:100px"><i>2023-08-12 11:22:33</i></div>
<div class="cell" style="left:1300px;top:730px;width:100px"><i>103.69.74.12</i></div>
<div class="cell" style="left:1401px;top:730px;width:100px"><i>2023-09-12 11:22:33</i></div>
<div class="cell" style="left:1502px;top:730px;width:100px"><i>103.69.74.12</i></div>
<div class="sw" style="left:1618px;top:739px"><b><z>否</z></b></div>
<div class="sw" style="left:1719px;top:739px"><b><z>否</z></b></div>
<div class="bb" style="left:1820px;top:740px;width:34px;background:#1E9FFF;border-radius:2px 0 0 2px"><z>资金</z></div>
<div class="bb" style="left:1854px;top:740px;width:28px;background:#009688;border-left:1px solid rgba(255,255,255,.5);border-radius:0 2px 2px 0"><svg style="position:absolute;left:6px;top:5px" width="12" height="12" viewBox="0 0 12 12"><path d="M1.2 10.8l.5-2.1 6.4-6.4a1 1 0 0 1 1.4 0l.2.2a1 1 0 0 1 0 1.4L3.3 10.3z" fill="#fff"/><path d="M7.6 2.6l1.800 1.800" stroke="#009688" stroke-width=".5"/></svg></div>
<div class="abs" style="left:391px;top:349px;width:8px;height:419px;background:linear-gradient(to right,rgba(0,0,0,.06),rgba(0,0,0,0))"></div>
<div class="abs" style="left:241px;top:769px;width:1658px;height:16px;background:#f1f1f1"></div>
<div class="hb" style="left:241px;top:768px;width:1658px"></div>
<div class="abs" style="left:258px;top:771px;width:1424px;height:13px;background:#c1c1c1"></div>
<svg class="abs" style="left:246px;top:773px" width="6" height="9" viewBox="0 0 6 9"><path d="M5 .8v7.4L1 4.5z" fill="#a3a3a3"/></svg>
<svg class="abs" style="left:1889px;top:773px" width="6" height="9" viewBox="0 0 6 9"><path d="M1 .8v7.4L5 4.5z" fill="#505050"/></svg>
<div class="hb" style="left:241px;top:785px;width:1658px"></div>
<div class="hb" style="left:241px;top:824px;width:1658px"></div>
<div class="vb" style="left:289px;top:786px;height:38px"></div>
<div class="vb" style="left:390px;top:786px;height:38px"></div>
<div class="vb" style="left:491px;top:786px;height:38px"></div>
<div class="vb" style="left:592px;top:786px;height:38px"></div>
<div class="vb" style="left:693px;top:786px;height:38px"></div>
<div class="vb" style="left:794px;top:786px;height:38px"></div>
<div class="vb" style="left:895px;top:786px;height:38px"></div>
<div class="vb" style="left:996px;top:786px;height:38px"></div>
<div class="vb" style="left:1097px;top:786px;height:38px"></div>
<div class="vb" style="left:1198px;top:786px;height:38px"></div>
<div class="vb" style="left:1299px;top:786px;height:38px"></div>
<div class="vb" style="left:1400px;top:786px;height:38px"></div>
<div class="vb" style="left:1501px;top:786px;height:38px"></div>
<div class="vb" style="left:1602px;top:786px;height:38px"></div>
<div class="vb" style="left:1703px;top:786px;height:38px"></div>
<div class="vb" style="left:1804px;top:786px;height:38px"></div>
<div class="cell" style="left:241px;top:786px;width:48px;padding-left:10px"><z>合计</z></div>
<div class="cell" style="left:593px;top:786px;width:100px">247.16</div>
<div class="cell" style="left:694px;top:786px;width:100px">144.00</div>
<div class="cell" style="left:795px;top:786px;width:100px">0.00</div>
<div class="abs" style="left:241px;top:825px;width:1658px;height:39px;background:#fff"></div>
<div class="t" style="left:248px;top:832px;line-height:26px;font-size:12px;color:#333"><z>共</z> 101 <z>条</z></div>
<svg class="abs" style="left:317px;top:838px" width="10" height="14" viewBox="0 0 10 14"><path d="M8 1L2 7l6 6" fill="none" stroke="#d2d2d2" stroke-width="1.2"/></svg>
<div class="abs" style="left:341px;top:832px;width:30px;height:26px;line-height:26px;background:#009688;color:#fff;border-radius:2px;text-align:center;font-size:12px">1</div>
<div class="t" style="left:382px;top:832px;line-height:26px;font-size:12px;color:#333">2</div>
<div class="t" style="left:412px;top:832px;line-height:26px;font-size:12px;color:#333">3</div>
<div class="t" style="left:430px;top:832px;line-height:26px;font-size:12px;color:#333">…</div>
<div class="t" style="left:453px;top:832px;line-height:26px;font-size:12px;color:#333">11</div>
<svg class="abs" style="left:491px;top:838px" width="10" height="14" viewBox="0 0 10 14"><path d="M2 1l6 6-6 6" fill="none" stroke="#333" stroke-width="1.2"/></svg>
<div class="abs" style="left:515px;top:832px;width:75px;height:26px;border:1px solid #e2e2e2;border-radius:2px;background:#fff"></div>
<div class="t" style="left:524px;top:832px;line-height:26px;font-size:12px;color:#333">10 <z>条</z>/<z>页</z></div>
<svg class="abs" style="left:575px;top:841px" width="10" height="8" viewBox="0 0 10 8"><path d="M1 1.5l4 4 4-4" fill="none" stroke="#000" stroke-width="1.8"/></svg>
<svg class="abs" style="left:622px;top:836px" width="18" height="18" viewBox="0 0 18 18"><path d="M15.2 6.2A7 7 0 1 0 15.8 10" fill="none" stroke="#333" stroke-width="1.05"/><path d="M16.3 2v5h-5" fill="none" stroke="#333" stroke-width="1.05"/></svg>
<div class="t" style="left:662px;top:832px;line-height:26px;font-size:12px;color:#999"><z>到第</z></div>
<div class="abs" style="left:696px;top:832px;width:40px;height:26px;line-height:24px;border:1px solid #e2e2e2;border-radius:2px;background:#fff;text-align:center;font-size:12px;color:#333">1</div>
<div class="t" style="left:746px;top:832px;line-height:26px;font-size:12px;color:#999"><z>页</z></div>
<div class="abs" style="left:768px;top:832px;width:46px;height:26px;line-height:24px;border:1px solid #e2e2e2;border-radius:2px;background:#fff;text-align:center;font-size:12px;color:#333"><z>确定</z></div>
<div class="abs" style="left:240px;top:296px;width:1660px;height:569px;border:1px solid #e6e6e6;box-shadow:0 1px 2px 0 rgba(0,0,0,.05)"></div>
</body></html>
